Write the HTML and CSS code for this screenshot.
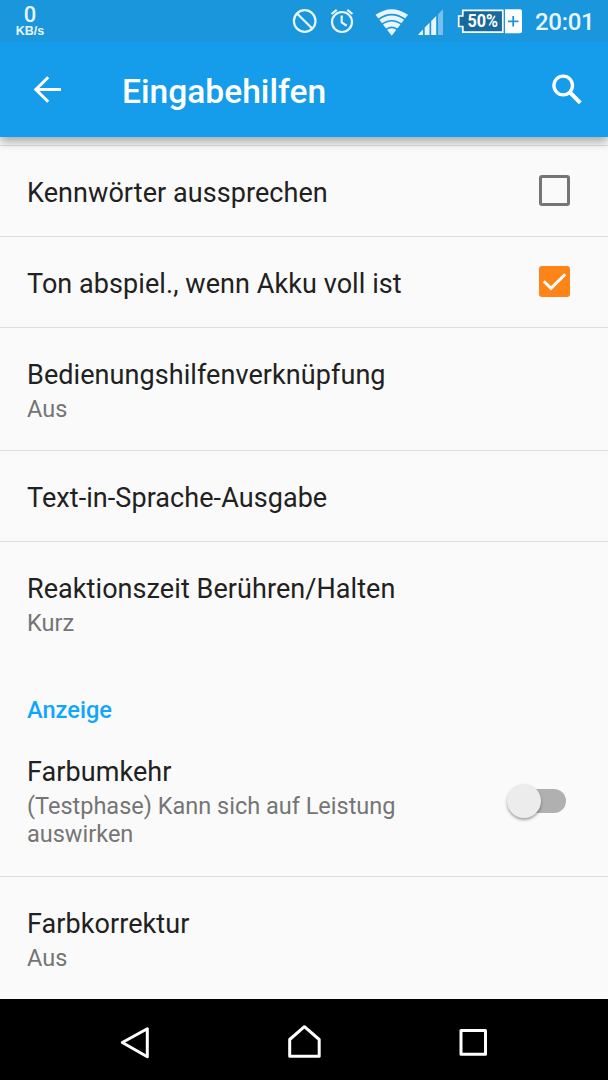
FILE: index.html
```html
<!DOCTYPE html>
<html lang="de">
<head>
    <meta charset="UTF-8">
    <meta name="viewport" content="width=device-width, initial-scale=1.0">
    <title>Eingabehilfen</title>
    <link rel="stylesheet" href="styles.css">
</head>
<body>
    <div class="screen">
        <div class="statusbar">
            <div class="netspeed">
                <span class="speed">0</span>
                <span class="unit">KB/s</span>
            </div>
            <svg class="status-icons" width="230" height="42" viewBox="290 0 230 42">
                <!-- blocked -->
                <g fill="none" stroke="#e8f5fd" stroke-width="2.2">
                    <circle cx="304.7" cy="21" r="10.8"/>
                    <path d="M297 13.5l15.4 15.2"/>
                </g>
                <!-- alarm -->
                <g fill="none" stroke="#e8f5fd" stroke-width="2.2">
                    <circle cx="342" cy="22" r="10"/>
                    <path d="M341.7 15.5v7l5 3.2M331.5 14l5.2-4.2M352.5 14l-5.2-4.2"/>
                </g>
                <!-- wifi -->
                <path fill="#e8f5fd" d="M391.7 35.7L375.5 14.8Q391.7 3.5 408 14.8z"/>
                <g fill="none" stroke="#1996dc" stroke-width="1.7">
                    <path d="M378 19.7Q391.7 9.5 405.5 19.7M381.5 24.7Q391.7 16.8 402 24.7M385.5 29.8Q391.7 25 398 29.8"/>
                </g>
                <!-- signal -->
                <g fill="#e8f5fd">
                    <path d="M418.5 35v-1l4.5-4.5V35zM424.7 35v-7.5l4.8-4.8V35zM431.2 35V21l5-5v19z"/>
                    <path opacity=".45" d="M438 35V14.3l5-5V35z"/>
                </g>
                <!-- battery -->
                <path fill="#176a9b" stroke="#fff" stroke-width="1.7" d="M462.8 10.3h40v21.9h-40v-5.7h-4.1V16h4.1z"/>
                <path fill="#fff" d="M505 9.2h15a2 2 0 0 1 2 2v20a2 2 0 0 1-2 2h-15z"/>
                <path stroke="#1996dc" stroke-width="1.8" d="M508 21.3h10.5M513.2 16v10.5"/>
                <text class="battery-level" x="467.5" y="27.4" textLength="30.5" lengthAdjust="spacingAndGlyphs">50%</text>
            </svg>
            <div class="clock">20:01</div>
        </div>

        <div class="toolbar">
            <svg class="back" width="28" height="28" viewBox="0 0 28 28">
                <path fill="none" stroke="#fff" stroke-width="3" d="M28 13.5H3M15.2 1.2L2.8 13.5l12.4 12.3"/>
            </svg>
            <h1>Eingabehilfen</h1>
            <svg class="search" width="32" height="32" viewBox="0 0 32 32">
                <g fill="none" stroke="#fff">
                    <circle cx="12.2" cy="11.5" r="9.3" stroke-width="3.3"/>
                    <path stroke-width="4" d="M19 18.5l10.3 10.3"/>
                </g>
            </svg>
        </div>

        <div class="list">
            <div class="row-end"></div>
            <div class="row single">
                <div class="title">Kennwörter aussprechen</div>
                <div class="checkbox"></div>
            </div>
            <div class="row single">
                <div class="title">Ton abspiel., wenn Akku voll ist</div>
                <div class="checkbox checked">
                    <svg width="31" height="31" viewBox="0 0 31 31">
                        <path fill="none" stroke="#fff" stroke-width="3" d="M4.8 15.2l7.2 7.2L26.2 8.2"/>
                    </svg>
                </div>
            </div>
            <div class="row">
                <div class="text">
                    <div class="title">Bedienungshilfenverknüpfung</div>
                    <div class="summary">Aus</div>
                </div>
            </div>
            <div class="row single">
                <div class="title">Text-in-Sprache-Ausgabe</div>
            </div>
            <div class="row last">
                <div class="text">
                    <div class="title">Reaktionszeit Berühren/Halten</div>
                    <div class="summary">Kurz</div>
                </div>
            </div>
            <h2>Anzeige</h2>
            <div class="row with-switch">
                <div class="text">
                    <div class="title">Farbumkehr</div>
                    <div class="summary">(Testphase) Kann sich auf Leistung auswirken</div>
                </div>
                <div class="switch"><div class="thumb"></div></div>
            </div>
            <div class="row last">
                <div class="text">
                    <div class="title">Farbkorrektur</div>
                    <div class="summary">Aus</div>
                </div>
            </div>
        </div>

        <div class="navbar">
            <svg width="608" height="81" viewBox="0 0 608 81">
                <g fill="none" stroke="#fff" stroke-width="3" stroke-linejoin="round">
                    <path d="M147.3 29.7v28L122.3 43.5z"/>
                    <path d="M289.7 57.2V40.5l14.7-12.8 14.8 12.8v16.7z"/>
                    <path d="M461 31.5h24.5v23.7H461z"/>
                </g>
            </svg>
        </div>
    </div>
</body>
</html>
```

FILE: styles.css
```css
body {
    margin: 0;
    font-family: Roboto, sans-serif;
    background-color: #fafafa;
    color: #212121;
}
.screen {
    width: 608px;
    height: 1080px;
    display: flex;
    flex-direction: column;
    overflow: hidden;
}
.statusbar {
    height: 42px;
    flex: none;
    display: flex;
    background-color: #1996dc;
    color: #e8f5fd;
    z-index: 2;
}
.netspeed {
    width: 60px;
    padding-top: 5px;
    box-sizing: border-box;
    display: flex;
    flex-direction: column;
    align-items: center;
    font-weight: bold;
}
.speed {
    font-size: 22px;
    line-height: 20px;
    font-weight: 500;
}
.unit {
    font-family: "Liberation Sans", Arial, sans-serif;
    font-size: 12.5px;
    line-height: 12px;
}
.status-icons {
    margin-left: auto;
    overflow: visible;
}
.battery-level {
    font-size: 18px;
    font-weight: 700;
    fill: #fff;
}
.clock {
    width: 88px;
    padding-left: 15px;
    box-sizing: border-box;
    font-size: 24px;
    line-height: 45px;
    letter-spacing: -0.3px;
    font-weight: 500;
}
.toolbar {
    height: 95px;
    flex: none;
    box-sizing: border-box;
    padding: 0 25px 0 33px;
    display: flex;
    align-items: center;
    background-color: #159ceb;
    box-shadow: 0 5px 9px rgba(0, 0, 0, 0.32);
    z-index: 1;
}
.toolbar h1 {
    margin: 5px 0 0 61px;
    flex: 1;
    font-size: 33.6px;
    line-height: 40px;
    font-weight: 500;
    color: white;
}
.list {
    flex: 1;
    min-height: 0;
    overflow: hidden;
}
.row-end {
    height: 8px;
    border-bottom: 1px solid #dedede;
}
.row {
    box-sizing: border-box;
    display: flex;
    justify-content: space-between;
    padding: 31px 38px 27px 27px;
    border-bottom: 1px solid #dedede;
}
.row.single {
    height: 91px;
    align-items: center;
    padding-top: 0;
    padding-bottom: 0;
}
.row.single .title {
    padding-top: 4px;
}
.row.with-switch {
    padding-bottom: 28px;
}
.row.last {
    border-bottom: none;
}
.title {
    font-size: 27px;
    line-height: 32px;
    letter-spacing: 0.07px;
}
.text {
    width: 390px;
}
.summary {
    margin-top: 4px;
    font-size: 23.5px;
    line-height: 28px;
    color: #757575;
}
.list h2 {
    margin: 0;
    padding: 32px 27px 1px;
    font-size: 23.6px;
    line-height: 28px;
    font-weight: 500;
    color: #11a6fb;
}
.checkbox {
    width: 31px;
    height: 31px;
    margin-bottom: 1px;
    box-sizing: border-box;
    border: 3px solid #757575;
    border-radius: 3px;
}
.checkbox.checked {
    border: none;
    background-color: #ff8417;
}
.switch {
    width: 44px;
    height: 24px;
    margin: 33px 4px 0 0;
    border-radius: 12px;
    background-color: #b0b0b0;
}
.thumb {
    width: 34px;
    height: 34px;
    margin: -5px 0 0 -15px;
    border-radius: 50%;
    background-color: #ececec;
    box-shadow: 0 2px 3px rgba(0, 0, 0, 0.35);
}
.navbar {
    height: 81px;
    flex: none;
    background-color: black;
}
```
